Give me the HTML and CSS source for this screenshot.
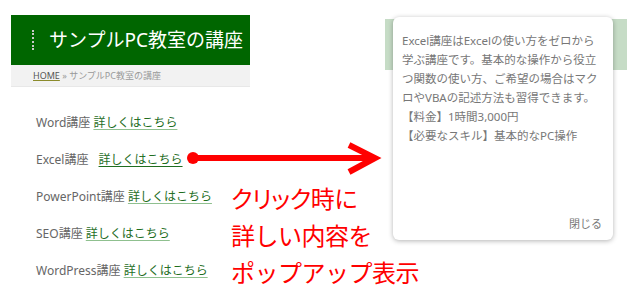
FILE: index.html
```html
<!DOCTYPE html>
<html lang="ja">

<head>
    <meta charset="UTF-8">
    <meta name="viewport" content="width=device-width, initial-scale=1.0">
    <title>サンプルPC教室の講座</title>
    <link rel="stylesheet" href="styles.css">
</head>

<body>
    <div class="page">
        <div class="site">
            <div class="header">
                <h1 class="title">サンプルPC教室の講座</h1>
            </div>
            <div class="crumb">
                <a href="#">HOME</a> &raquo; サンプルPC教室の講座
            </div>
            <ul class="courses">
                <li>Word講座 <a href="#">詳しくはこちら</a></li>
                <li>Excel講座 <a href="#" class="active">詳しくはこちら</a></li>
                <li>PowerPoint講座 <a href="#">詳しくはこちら</a></li>
                <li>SEO講座 <a href="#">詳しくはこちら</a></li>
                <li>WordPress講座 <a href="#">詳しくはこちら</a></li>
            </ul>
        </div>
        <div class="behind">
            <div class="band"></div>
        </div>
    </div>

    <!-- ポップアップ -->
    <div class="popup">
        <p class="popup-text">Excel講座はExcelの使い方をゼロから学ぶ講座です。基本的な操作から役立つ関数の使い方、ご希望の場合はマクロやVBAの記述方法も習得できます。<br>【料金】1時間3,000円<br>【必要なスキル】基本的なPC操作</p>
        <span class="close">閉じる</span>
    </div>

    <!-- 説明用の矢印 -->
    <svg class="arrow" width="630" height="304" viewBox="0 0 630 304">
        <line x1="193" y1="158" x2="374" y2="158" stroke="#f00" stroke-width="6" />
        <circle cx="193" cy="158" r="6" fill="#f00" />
        <polyline points="349,145 375,158 349,172" fill="none" stroke="#f00" stroke-width="6" />
    </svg>
    <p class="note"><span class="narrow">クリック</span>時に<br>詳しい内容を<br>ポップアップ表示</p>
</body>

</html>
```

FILE: styles.css
```css
* {
    padding: 0;
    margin: 0;
    box-sizing: border-box;
}

body {
    width: 630px;
    height: 304px;
    background: #fff;
    font-family: "Noto Sans", "Noto Sans CJK JP", sans-serif;
    position: relative;
    overflow: hidden;
}

.page {
    display: flex;
}

.site {
    width: 239px;
    margin: 15px 0 0 11px;
}

.header {
    height: 50px;
    background: #006600;
    display: flex;
    align-items: center;
    padding-left: 21px;
}

.header .title {
    font-size: 19px;
    font-weight: normal;
    color: #fff;
    border-left: 2px dotted #c8c8c8;
    padding-left: 15px;
    line-height: 20px;
}

.crumb {
    height: 22px;
    background: #f2f2f2;
    border-bottom: 1px solid #e8e8e8;
    font-size: 9px;
    color: #999;
    line-height: 22px;
    padding-left: 22px;
}

.crumb a {
    color: #555;
    text-decoration: underline;
    text-decoration-color: #8b8b2b;
}

.courses {
    list-style: none;
    padding: 27px 0 0 25px;
}

.courses li {
    font-size: 12px;
    line-height: 18px;
    color: #666;
    margin-bottom: 19px;
}

.courses a {
    color: #1f6e1f;
    text-decoration: underline;
    text-decoration-color: #8fc08f;
    text-underline-offset: 2px;
}

.courses a.active {
    margin-left: 7px;
    text-decoration-color: #1f6e1f;
}

.behind {
    flex: 1;
    padding: 19px 3px 0 135px;
}

.band {
    height: 51px;
    background: #c6dcc6;
}

.popup {
    position: absolute;
    left: 393px;
    top: 17px;
    width: 220px;
    height: 223px;
    background: #fff;
    border-radius: 6px;
    box-shadow: 0 1px 5px rgba(0, 0, 0, 0.3);
    padding: 14px 9px 0 9px;
    display: flex;
    flex-direction: column;
}

.popup-text {
    font-size: 11.5px;
    line-height: 19px;
    color: #777;
    flex: 1;
}

.popup .close {
    align-self: flex-end;
    font-size: 11px;
    color: #777;
    margin: 0 2px 9px 0;
}

.arrow {
    position: absolute;
    left: 0;
    top: 0;
    pointer-events: none;
}

.note {
    position: absolute;
    left: 231px;
    top: 179px;
    font-family: "Noto Sans CJK JP", sans-serif;
    font-size: 24px;
    line-height: 37px;
    color: #f00;
    letter-spacing: -0.5px;
}

.note .narrow {
    font-feature-settings: "palt";
}
```
